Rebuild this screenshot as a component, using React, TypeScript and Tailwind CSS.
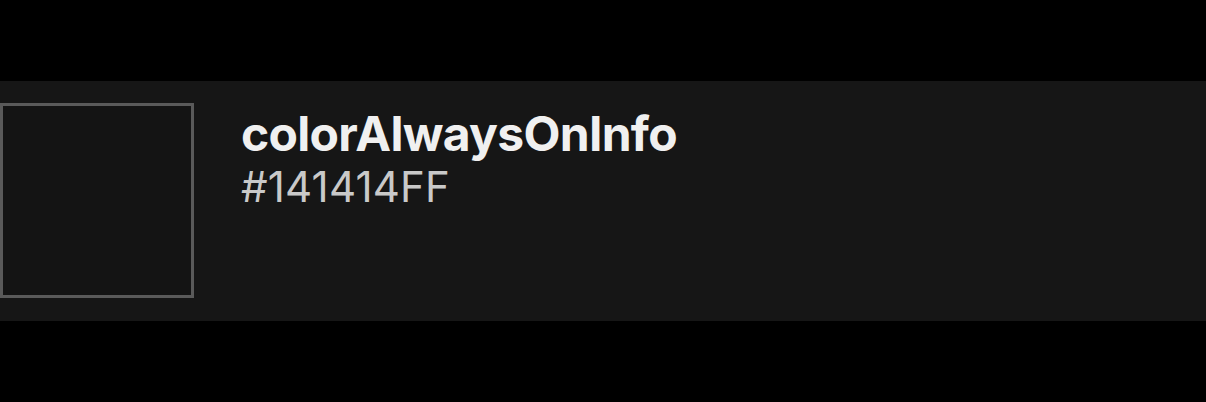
export default function App() {
  return (
    <div className="h-[402px] w-full bg-black pt-[81px]" style={{ fontFamily: "Inter, 'Noto Sans', sans-serif" }}>
      <div className="flex h-[240px] items-start gap-[47px] bg-[#161616] pt-[22px]">
        <div className="h-[195px] w-[194px] shrink-0 border-[3px] border-[#5a5a5a] bg-[#141414]" />
        <div className="flex flex-col pt-[3px]">
          <div className="text-[48px] font-bold leading-[56px] tracking-[-0.7px] text-[#f0f0f0]">colorAlwaysOnInfo</div>
          <div className="text-[42px] font-normal leading-[50px] tracking-[0.2px] text-[#c9c9c9]">#141414FF</div>
        </div>
      </div>
    </div>
  );
}
